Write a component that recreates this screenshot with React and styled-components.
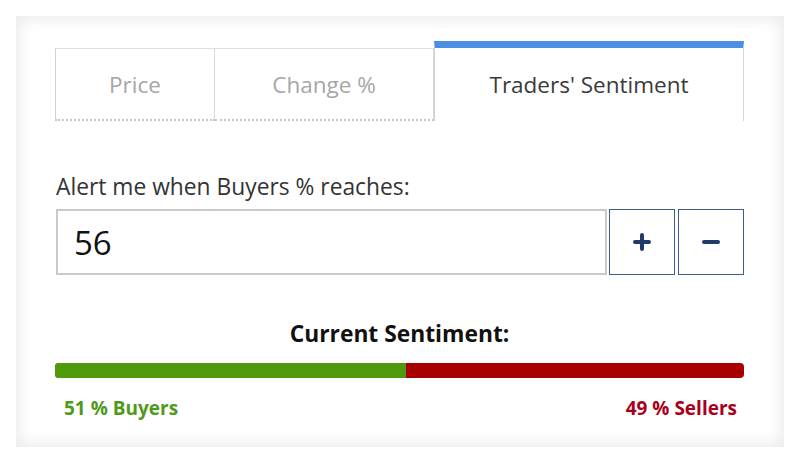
import React from "react";
import styled, { createGlobalStyle } from "styled-components";

const Global = createGlobalStyle`
  html, body { margin: 0; padding: 0; background: #fff; }
  body { font-family: "Open Sans", "Noto Sans", sans-serif; }
`;

const Page = styled.div`
  width: 800px;
  height: 464px;
  padding: 16px;
  box-sizing: border-box;
  background: #fff;
`;

const Card = styled.div`
  width: 768px;
  height: 431px;
  box-sizing: border-box;
  background: #fff;
  box-shadow: inset 0 0 14px 4px #ececec;
  padding: 25px 40px 0 39px;
  display: flex;
  flex-direction: column;
`;

const Tabs = styled.div`
  display: flex;
  align-items: flex-end;
  height: 80px;
`;

const Tab = styled.div`
  box-sizing: border-box;
  width: ${(p) => p.$w}px;
  height: ${(p) => (p.$active ? 80 : 73)}px;
  display: flex;
  align-items: center;
  justify-content: center;
  font-size: 22.5px;
  color: ${(p) => (p.$active ? "#3a3a3a" : "#a6a6a6")};
  border: 1px solid #d8d8d8;
  border-left: ${(p) => (p.$first || p.$active ? "1px solid #d0d0d0" : "none")};
  border-top: ${(p) => (p.$active ? "7px solid #4a8fe3" : "1px solid #e0e0e0")};
  border-bottom: ${(p) => (p.$active ? "none" : "2px dotted #c6c6c6")};
  padding-top: ${(p) => (p.$active ? 0 : 1)}px;
`;

const Label = styled.div`
  margin-top: 54px;
  font-size: 22.8px;
  color: #333;
  line-height: 24px;
  margin-left: 1px;
`;

const InputRow = styled.div`
  display: flex;
  margin-top: 10px;
  margin-left: 1px;
  gap: 2px;
`;

const Input = styled.div`
  box-sizing: border-box;
  width: 551px;
  height: 66px;
  border: 2px solid #c9c9c9;
  display: flex;
  align-items: center;
  padding-left: 16px;
  font-size: 33px;
  color: #111;
`;

const StepButton = styled.button`
  box-sizing: border-box;
  width: 66px;
  height: 66px;
  border: 1.5px solid #3f5d8c;
  background: #fff;
  display: flex;
  align-items: center;
  justify-content: center;
  padding: 0;
  margin-left: ${(p) => p.$ml || 0}px;
`;

const Title = styled.div`
  margin-top: 46px;
  text-align: center;
  font-size: 22.8px;
  font-weight: 700;
  color: #111;
  line-height: 26px;
`;

const Bar = styled.div`
  margin-top: 16px;
  height: 15px;
  border-radius: 4px;
  overflow: hidden;
  display: flex;
  background: #a80000;
`;

const Segment = styled.div`
  height: 100%;
  background: ${(p) => p.$c};
`;

const Legend = styled.div`
  display: flex;
  justify-content: space-between;
  margin-top: 20px;
  padding: 0 7px 0 9px;
  font-size: 19px;
  font-weight: 700;
  line-height: 20px;
`;

const LegendItem = styled.span`
  color: ${(p) => p.$c};
`;

export default function App() {
  const buyers = 51;
  return (
    <>
      <Global />
      <Page>
        <Card>
          <Tabs>
            <Tab $w={160} $first>Price</Tab>
            <Tab $w={219}>Change %</Tab>
            <Tab $w={310} $active>Traders' Sentiment</Tab>
          </Tabs>
          <Label>Alert me when Buyers % reaches:</Label>
          <InputRow>
            <Input>56</Input>
            <StepButton>
              <svg width="20" height="20" viewBox="0 0 20 20">
                <path d="M10 3v14M3 10h14" stroke="#1f3a6b" strokeWidth="4" strokeLinecap="round" />
              </svg>
            </StepButton>
            <StepButton $ml={1}>
              <svg width="20" height="20" viewBox="0 0 20 20">
                <path d="M3 10h14" stroke="#1f3a6b" strokeWidth="4" strokeLinecap="round" />
              </svg>
            </StepButton>
          </InputRow>
          <Title>Current Sentiment:</Title>
          <Bar>
            <Segment $c="#4f9a0b" style={{ width: `${buyers}%` }} />
          </Bar>
          <Legend>
            <LegendItem $c="#4f9a1a">{buyers} % Buyers</LegendItem>
            <LegendItem $c="#a8001a">{100 - buyers} % Sellers</LegendItem>
          </Legend>
        </Card>
      </Page>
    </>
  );
}
